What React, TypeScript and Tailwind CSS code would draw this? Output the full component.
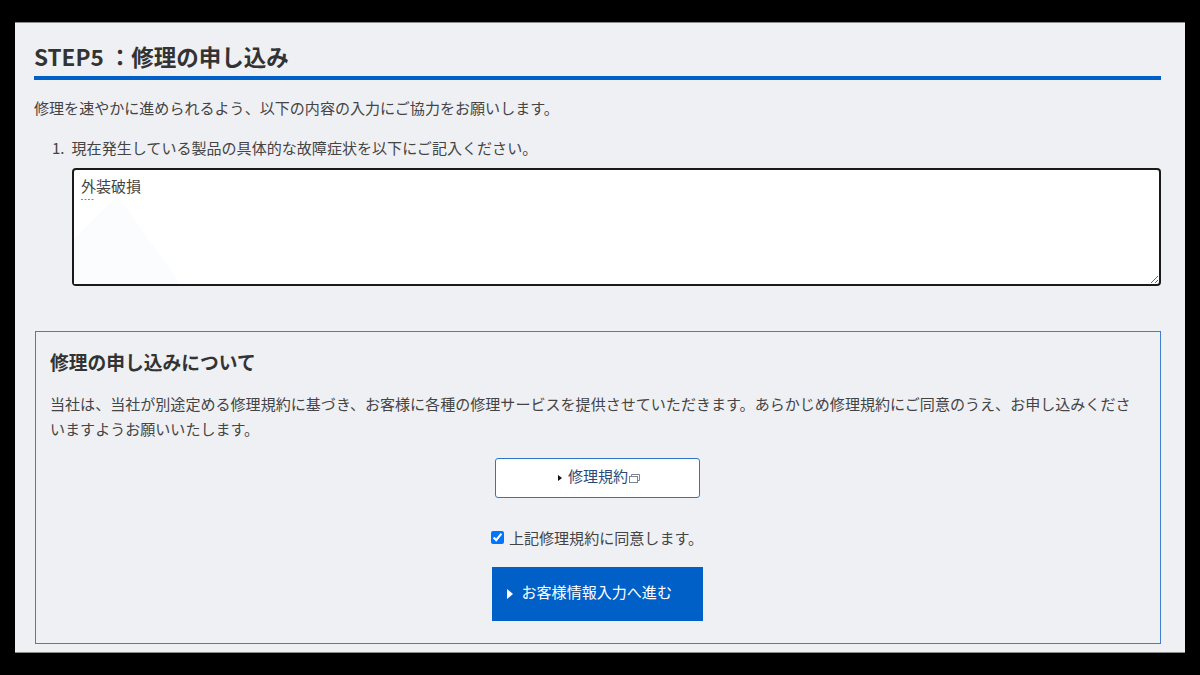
import React from 'react';

const FONT = "font-['Noto_Sans_CJK_JP','Noto_Sans',sans-serif]";

export default function App() {
  return (
    <div className={`w-[1200px] h-[675px] bg-black pt-[22px] overflow-hidden ${FONT}`}>
      <div className="mx-[15px] h-[631px] bg-[#eff0f4] border-y border-y-[#8a8a8a] pl-[19px] pr-[24px] text-[#444] text-[15.06px] overflow-hidden">
        <h2 className="mt-[17px] h-[36px] border-b-[4px] border-[#0060c7] text-[22.5px] leading-[33px] font-bold text-[#333] box-content">
          STEP5 ：修理の申し込み
        </h2>
        <p className="mt-[16px] leading-[24px]">修理を速やかに進められるよう、以下の内容の入力にご協力をお願いします。</p>
        <ol className="mt-[16px] ml-[18px]">
          <li className="leading-[24px] flex gap-[7px]">
            <span>1.</span>
            <span>現在発生している製品の具体的な故障症状を以下にご記入ください。</span>
          </li>
        </ol>
        <div className="mt-[8px] ml-[38px] w-[1089px] h-[118px] relative">
          <textarea
            readOnly
            defaultValue="外装破損"
            className="block w-full h-full resize-y bg-white border-2 border-[#1a1a1a] rounded-[4px] px-[7px] py-[5px] text-[15px] leading-[21px] text-[#444] outline-none"
          />
          {/* faint artefacts over the field */}
          <svg width="120" height="100" viewBox="0 0 120 100" className="absolute left-[2px] top-[16px] pointer-events-none">
            <polygon points="0,55 44,12 106,100 0,100" fill="#fbfcfe" />
            <path d="M7 15.5H21" stroke="#8a8a8a" strokeWidth="1" strokeDasharray="2 1.5" />
          </svg>
        </div>
        <section className="mt-[45px] ml-[1px] w-[1126px] h-[313px] border border-[#3f7fcf] px-[14px] pt-[15px]">
          <h3 className="text-[18.75px] leading-[30px] font-bold text-[#333]">修理の申し込みについて</h3>
          <p className="mt-[14px] pr-[6px] leading-[25px]">
            当社は、当社が別途定める修理規約に基づき、お客様に各種の修理サービスを提供させていただきます。あらかじめ修理規約にご同意のうえ、お申し込みくださいますようお願いいたします。
          </p>
          <div className="mt-[17px] flex flex-col items-center">
            <a className="ml-[-2px] w-[205px] h-[40px] pl-[4px] pb-[3px] bg-white border border-[#2f74c8] rounded-[3px] flex items-center justify-center text-[#2b4a78]">
              <span className="mt-[3px] mr-[6px] w-0 h-0 border-y-[3px] border-y-transparent border-l-[4px] border-l-[#111]" />
              修理規約
              <svg width="11" height="9" viewBox="0 0 11 9" className="mt-[3px] ml-[1px]" fill="none" stroke="#7a8595" strokeWidth="1">
                <rect x="0.5" y="2.5" width="8" height="6" />
                <path d="M2.5 2.5V0.5H10.5V6.5H8.5" />
              </svg>
            </a>
            <label className="mt-[28px] ml-[-2px] h-[22px] flex items-center gap-[5px] leading-[22px]">
              <input type="checkbox" defaultChecked className="w-[13px] h-[13px] accent-[#0075ff] m-0" />
              <span className="mt-[2px]">上記修理規約に同意します。</span>
            </label>
            <button className="mt-[19px] ml-[-2px] w-[211px] h-[54px] bg-[#0060c7] text-white flex items-center pl-[15px] pb-[3px]">
              <span className="mt-[3px] mr-[9px] w-0 h-0 border-y-[5px] border-y-transparent border-l-[6px] border-l-white" />
              お客様情報入力へ進む
            </button>
          </div>
        </section>
      </div>
    </div>
  );
}
